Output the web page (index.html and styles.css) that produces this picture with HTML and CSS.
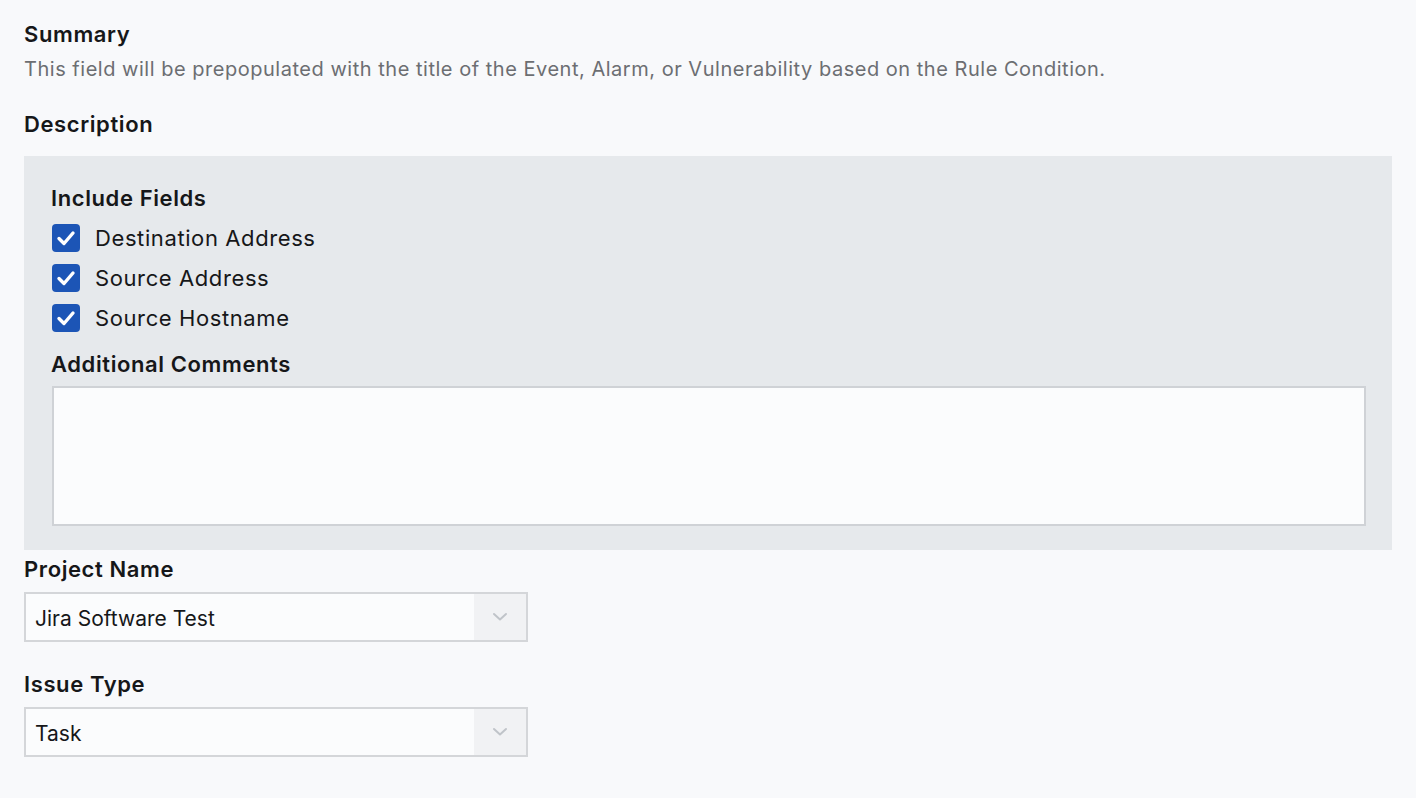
FILE: index.html
```html
<!DOCTYPE html>
<html>
<head>
<meta charset="utf-8">
<link rel="stylesheet" href="styles.css">
</head>
<body>
<div class="page">
  <div class="field">
    <div class="label">Summary</div>
    <div class="hint">This field will be prepopulated with the title of the Event, Alarm, or Vulnerability based on the Rule Condition.</div>
  </div>
  <div class="label desc-label">Description</div>
  <div class="panel">
    <div class="label">Include Fields</div>
    <div class="checks">
      <label class="check"><span class="box"><svg viewBox="0 0 28 28" width="28" height="28"><path d="M7 14.5 L12 19.5 L21 9" fill="none" stroke="#fff" stroke-width="3.4" stroke-linecap="round" stroke-linejoin="round"/></svg></span>Destination Address</label>
      <label class="check"><span class="box"><svg viewBox="0 0 28 28" width="28" height="28"><path d="M7 14.5 L12 19.5 L21 9" fill="none" stroke="#fff" stroke-width="3.4" stroke-linecap="round" stroke-linejoin="round"/></svg></span>Source Address</label>
      <label class="check"><span class="box"><svg viewBox="0 0 28 28" width="28" height="28"><path d="M7 14.5 L12 19.5 L21 9" fill="none" stroke="#fff" stroke-width="3.4" stroke-linecap="round" stroke-linejoin="round"/></svg></span>Source Hostname</label>
    </div>
    <div class="label comments-label">Additional Comments</div>
    <div class="textarea"></div>
  </div>
  <div class="label sel-label">Project Name</div>
  <div class="select">
    <span class="value">Jira Software Test</span>
    <span class="arrow"><svg viewBox="0 0 16 10" width="16" height="10"><path d="M2 2 L8 7.5 L14 2" fill="none" stroke="#c0c4c9" stroke-width="2" stroke-linecap="round" stroke-linejoin="round"/></svg></span>
  </div>
  <div class="label sel-label issue">Issue Type</div>
  <div class="select">
    <span class="value">Task</span>
    <span class="arrow"><svg viewBox="0 0 16 10" width="16" height="10"><path d="M2 2 L8 7.5 L14 2" fill="none" stroke="#c0c4c9" stroke-width="2" stroke-linecap="round" stroke-linejoin="round"/></svg></span>
  </div>
</div>
</body>
</html>
```
FILE: styles.css
```css
html, body {
  margin: 0;
  padding: 0;
  background: #f8f9fb;
}
body {
  font-family: Inter, Lato, sans-serif;
  color: #161719;
}
.page {
  padding: 20px 24px 0 24px;
  width: 1368px;
}
.label {
  font-size: 22px;
  font-weight: 600;
  line-height: 28px;
  letter-spacing: 0.6px;
}
.hint {
  font-size: 20px;
  line-height: 28px;
  color: #6c6e72;
  margin-top: 7px;
  letter-spacing: 0.52px;
}
.desc-label {
  margin-top: 27px;
}
.panel {
  margin-top: 18px;
  background: #e6e9ec;
  padding: 28px 26px 24px 27px;
}
.checks {
  display: flex;
  flex-direction: column;
  gap: 12px;
  margin-top: 12px;
}
.check {
  display: flex;
  align-items: center;
  gap: 15px;
  font-size: 22px;
  line-height: 28px;
  letter-spacing: 0.6px;
  padding-left: 1px;
}
.box {
  width: 28px;
  height: 28px;
  border-radius: 4px;
  background: #1c55b6;
  display: flex;
}
.comments-label {
  margin-top: 18px;
}
.textarea {
  margin-top: 8px;
  height: 136px;
  margin-left: 1px;
  background: #fbfcfd;
  border: 2px solid #cfd2d6;
}
.sel-label {
  margin-top: 5px;
}
.sel-label.issue {
  margin-top: 28px;
}
.select {
  margin-top: 9px;
  width: 500px;
  height: 46px;
  border: 2px solid #d4d6d9;
  background: #fbfcfd;
  display: flex;
  align-items: center;
}
.value {
  flex: 1;
  padding-left: 9px;
  padding-top: 3px;
  font-size: 21px;
}
.arrow {
  width: 52px;
  height: 46px;
  background: #f1f2f4;
  display: flex;
  align-items: center;
  justify-content: center;
}
```
